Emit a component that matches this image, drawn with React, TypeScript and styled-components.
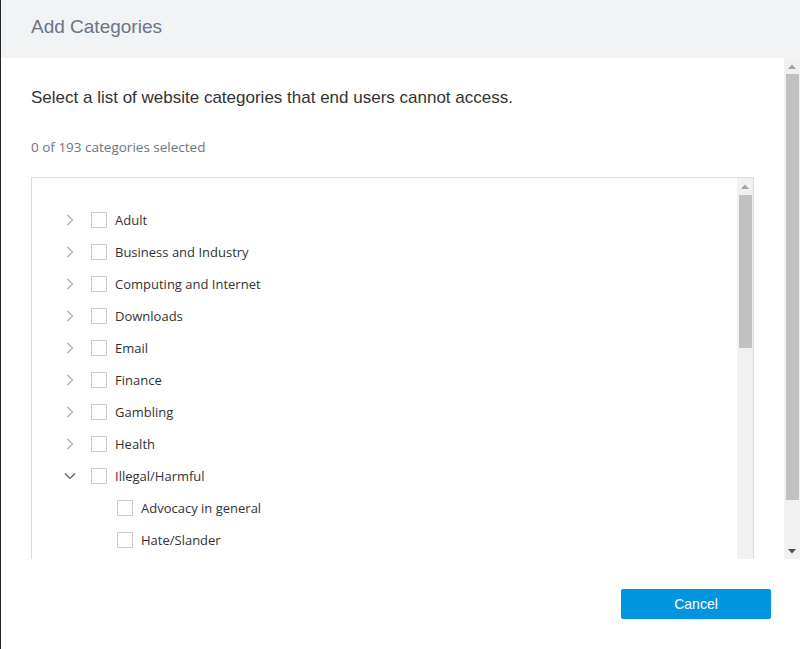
import styled, { createGlobalStyle } from "styled-components";

type Category = {
  name: string;
  open?: boolean;
  children?: string[];
};

const categories: Category[] = [
  { name: "Adult" },
  { name: "Business and Industry" },
  { name: "Computing and Internet" },
  { name: "Downloads" },
  { name: "Email" },
  { name: "Finance" },
  { name: "Gambling" },
  { name: "Health" },
  {
    name: "Illegal/Harmful",
    open: true,
    children: ["Advocacy in general", "Hate/Slander"],
  },
];

const ChevronRight = () => (
  <svg width="8" height="12" viewBox="0 0 8 12">
    <path d="M1.5 1 L6.5 6 L1.5 11" fill="none" stroke="#a9a9a9" strokeWidth="1.1" />
  </svg>
);

const ChevronDown = () => (
  <svg width="12" height="8" viewBox="0 0 12 8">
    <path d="M1 1.5 L6 6.5 L11 1.5" fill="none" stroke="#5a5a5a" strokeWidth="1.2" />
  </svg>
);

const Arrow = ({ up, active }: { up?: boolean; active?: boolean }) => (
  <svg width="8" height="5" viewBox="0 0 8 5">
    <polygon
      points={up ? "0,5 8,5 4,0.5" : "0,0 8,0 4,4.5"}
      fill={active ? "#505050" : "#a3a3a3"}
    />
  </svg>
);

const Scrollbar = ({ offset, thumb }: { offset: number; thumb: number }) => (
  <Track>
    <ArrowButton>
      <Arrow up />
    </ArrowButton>
    <Thumb $offset={offset} $size={thumb} />
    <TrackRest />
    <ArrowButton>
      <Arrow active />
    </ArrowButton>
  </Track>
);

const App = () => {
  return (
    <>
      <GlobalStyle />
      <Dialog>
        <Header>
          <Title>Add Categories</Title>
        </Header>

        <Body>
          <Content>
            <Description>
              Select a list of website categories that end users cannot access.
            </Description>
            <Count>0 of 193 categories selected</Count>

            <TreeBox>
              <Tree>
                {categories.map((cat) => (
                  <li key={cat.name}>
                    <Row $indent={0}>
                      <Toggle>{cat.open ? <ChevronDown /> : <ChevronRight />}</Toggle>
                      <Checkbox />
                      <Label>{cat.name}</Label>
                    </Row>
                    {cat.open &&
                      cat.children?.map((child) => (
                        <Row key={child} $indent={26}>
                          <Toggle />
                          <Checkbox />
                          <Label>{child}</Label>
                        </Row>
                      ))}
                  </li>
                ))}
              </Tree>
              <Scrollbar offset={1} thumb={153} />
            </TreeBox>
          </Content>
          <Scrollbar offset={0} thumb={426} />
        </Body>

        <Footer>
          <CancelButton>Cancel</CancelButton>
        </Footer>
      </Dialog>
    </>
  );
};

const GlobalStyle = createGlobalStyle`
  body {
    margin: 0;
    background: #ffffff;
    font-family: "Open Sans", "Liberation Sans", sans-serif;
  }
  ul {
    margin: 0;
    padding: 0;
    list-style: none;
  }
`;

const Dialog = styled.div`
  width: 800px;
  height: 649px;
  box-sizing: border-box;
  border-left: 1px solid #262626;
  background: #ffffff;
  display: flex;
  flex-direction: column;
  overflow: hidden;
`;

const Header = styled.header`
  height: 58px;
  flex-shrink: 0;
  box-sizing: border-box;
  padding: 16px 30px 0;
  background: #f2f3f5;
`;

const Title = styled.h1`
  margin: 0;
  font-family: "Liberation Sans", Arial, sans-serif;
  font-weight: normal;
  font-size: 19px;
  line-height: 22px;
  color: #6b7584;
`;

const Body = styled.div`
  height: 501px;
  flex-shrink: 0;
  display: flex;
  overflow: hidden;
`;

const Content = styled.div`
  flex: 1;
  min-width: 0;
  padding: 0 30px;
  overflow: hidden;
`;

const Description = styled.p`
  margin: 30px 0 0;
  font-family: "Liberation Sans", Arial, sans-serif;
  font-size: 17px;
  line-height: 20px;
  color: #333333;
`;

const Count = styled.p`
  margin: 30px 0 0;
  font-size: 13.5px;
  line-height: 18px;
  color: #6b7584;
`;

const TreeBox = styled.div`
  margin-top: 21px;
  height: 420px;
  border: 1px solid #dcdcdc;
  display: flex;
`;

const Tree = styled.ul`
  flex: 1;
  padding-top: 26px !important;
  overflow: hidden;
`;

const Row = styled.div<{ $indent: number }>`
  height: 32px;
  display: flex;
  align-items: center;
  padding-left: ${({ $indent }) => 28 + $indent}px;
`;

const Toggle = styled.span`
  width: 20px;
  height: 16px;
  margin-right: 11px;
  display: flex;
  align-items: center;
  justify-content: center;
`;

const Checkbox = styled.span`
  width: 16px;
  height: 16px;
  box-sizing: border-box;
  border: 1px solid #cccccc;
  border-radius: 1px;
  background: #ffffff;
  margin-right: 8px;
  flex-shrink: 0;
`;

const Label = styled.span`
  font-size: 13px;
  color: #333333;
`;

const Track = styled.div`
  width: 16px;
  flex-shrink: 0;
  background: #f1f1f1;
  display: flex;
  flex-direction: column;
`;

const ArrowButton = styled.div`
  height: 16px;
  flex-shrink: 0;
  display: flex;
  align-items: center;
  justify-content: center;
`;

const Thumb = styled.div<{ $offset: number; $size: number }>`
  margin: ${({ $offset }) => $offset}px 1px 0 2px;
  height: ${({ $size }) => $size}px;
  flex-shrink: 0;
  background: #c1c1c1;
`;

const TrackRest = styled.div`
  flex: 1;
`;

const Footer = styled.footer`
  flex: 1;
  display: flex;
  justify-content: flex-end;
  align-items: flex-start;
  padding: 30px 29px 0 0;
`;

const CancelButton = styled.button`
  width: 150px;
  height: 30px;
  border: none;
  border-radius: 2px;
  background: #0095de;
  color: #ffffff;
  font-family: "Liberation Sans", Arial, sans-serif;
  font-size: 14px;
  cursor: pointer;
`;

export default App;
